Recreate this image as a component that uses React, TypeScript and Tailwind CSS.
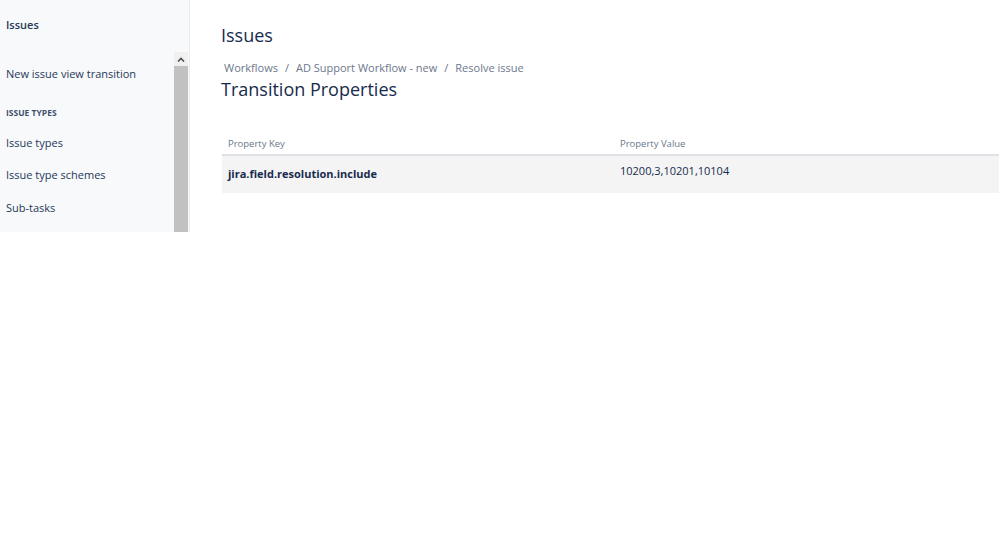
export default function App() {
  const font = { fontFamily: '"Segoe UI", "Open Sans", "Noto Sans", sans-serif' };
  return (
    <div className="flex w-[999px] h-[533px] bg-white overflow-hidden" style={font}>
      <aside className="relative w-[190px] h-[232px] shrink-0 bg-[#f8f9fb] border-r border-[#e9ebef]">
        <div className="pl-[6px]">
          <div className="h-[50px] flex items-center text-[11px] font-semibold text-[#253858]">Issues</div>
          <div className="h-[48px] flex items-center text-[11px] text-[#253858]">New issue view transition</div>
          <div className="h-[30px] flex items-center text-[8.5px] font-bold text-[#42526e]">ISSUE TYPES</div>
          <div className="h-[30px] flex items-center text-[11px] text-[#253858]">Issue types</div>
          <div className="h-[34px] flex items-center text-[11px] text-[#253858]">Issue type schemes</div>
          <div className="h-[32px] flex items-center text-[11px] text-[#253858]">Sub-tasks</div>
        </div>
        <div className="absolute left-[174px] top-[52px] w-[14px] h-[180px] flex flex-col bg-[#f0f0f0]">
          <div className="h-[14px] flex items-center justify-center">
            <svg width="8" height="5" viewBox="0 0 8 5">
              <path d="M1 4.5 L4 1.5 L7 4.5" fill="none" stroke="#505050" strokeWidth="1.6" />
            </svg>
          </div>
          <div className="flex-1 bg-[#c1c1c1]" />
        </div>
      </aside>
      <main className="flex-1 pl-[31px] pt-[23px]">
        <h1 className="text-[18px] leading-[24px] text-[#172b4d]">Issues</h1>
        <div className="mt-[14px] pl-[3px] flex items-center gap-[7px] text-[11px] leading-[14px] text-[#6b778c]">
          <span>Workflows</span>
          <span>/</span>
          <span>AD Support Workflow - new</span>
          <span>/</span>
          <span>Resolve issue</span>
        </div>
        <h2 className="mt-[2px] text-[18px] leading-[24px] text-[#172b4d]">Transition Properties</h2>
        <div className="mt-[29px] ml-[1px]">
          <div className="flex h-[26px] pt-[5px] items-center border-b-2 border-[#dfe1e6] text-[9.5px] text-[#6b778c]">
            <div className="w-[392px] pl-[6px]">Property Key</div>
            <div className="flex-1 pl-[6px]">Property Value</div>
          </div>
          <div className="flex h-[37px] bg-[#f4f4f4] text-[#172b4d]">
            <div className="w-[392px] pl-[6px] flex items-center text-[11px] font-bold">jira.field.resolution.include</div>
            <div className="flex-1 pl-[6px] pt-[7px] text-[11px]">10200,3,10201,10104</div>
          </div>
        </div>
      </main>
    </div>
  );
}
